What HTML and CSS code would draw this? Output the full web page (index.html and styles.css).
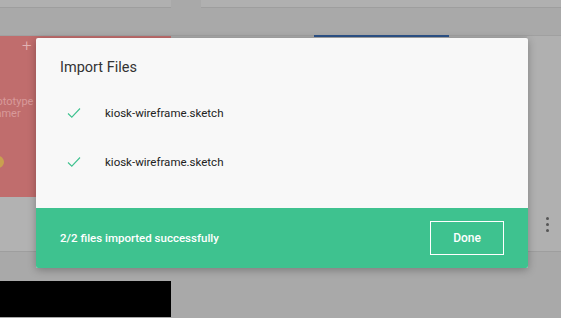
FILE: index.html
```html
<!DOCTYPE html>
<html>
<head>
<meta charset="utf-8">
<link rel="stylesheet" href="styles.css">
</head>
<body>
<div class="page">
  <div class="toprow">
    <div class="tcard tcard-left"></div>
    <div class="tcard tcard-right"></div>
  </div>
  <div class="band"></div>
  <div class="main">
    <div class="lcard">
      <div class="red">
        <span class="plus">+</span>
        <div class="rtext">Prototype<br>Framer</div>
        <span class="dot-y"></span>
      </div>
      <div class="lgray"></div>
    </div>
    <div class="mid"><div class="tabbar"></div></div>
    <div class="rcard">
      <div class="kebab"><span></span><span></span><span></span></div>
    </div>
  </div>
  <div class="black"></div>

  <div class="modal">
    <div class="modal-body">
      <h1 class="title">Import Files</h1>
      <ul class="files">
        <li class="file">
          <svg class="check" width="14" height="12" viewBox="0 0 14 12"><path d="M1 6.5 L4.8 10.2 L13 1.5" fill="none" stroke="#3ec28f" stroke-width="1.1"/></svg>
          <span class="fname">kiosk-wireframe.sketch</span>
        </li>
        <li class="file">
          <svg class="check" width="14" height="12" viewBox="0 0 14 12"><path d="M1 6.5 L4.8 10.2 L13 1.5" fill="none" stroke="#3ec28f" stroke-width="1.1"/></svg>
          <span class="fname">kiosk-wireframe.sketch</span>
        </li>
      </ul>
    </div>
    <div class="modal-foot">
      <span class="status">2/2 files imported successfully</span>
      <button class="done">Done</button>
    </div>
  </div>
</div>
</body>
</html>
```
FILE: styles.css
```css
* { box-sizing: border-box; }
html, body { margin: 0; padding: 0; }
body {
  width: 561px;
  height: 318px;
  overflow: hidden;
  background: #a9a9a9;
  font-family: Roboto, "Liberation Sans", sans-serif;
}
.page { position: relative; width: 561px; height: 318px; }
.toprow { display: flex; gap: 30px; height: 8px; }
.tcard { background: #b0b0b0; border-bottom: 1px solid #9e9e9e; height: 8px; }
.tcard-left { width: 171px; }
.tcard-right { flex: 1; }
.band { height: 28px; border-bottom: 1px solid #a0a0a0; }
.main { display: flex; height: 216px; }
.lcard { width: 171px; display: flex; flex-direction: column; }
.red {
  position: relative;
  height: 161px;
  background: #c06d6d;
  overflow: hidden;
}
.plus {
  position: absolute;
  left: 22px; top: 1px;
  color: #e3b4b4;
  font-size: 17px;
  line-height: 16px;
  font-weight: 300;
}
.rtext {
  position: absolute;
  left: -14px; top: 60px;
  color: #d89a9a;
  font-size: 11px;
  line-height: 12px;
}
.dot-y {
  position: absolute;
  left: -8px; top: 120px;
  width: 12px; height: 12px;
  border-radius: 50%;
  background: #c9a04f;
}
.lgray { flex: 1; background: #b2b2b2; border-bottom: 1px solid #9e9e9e; }
.mid { flex: 1; padding-left: 143px; }
.tabbar { width: 135px; height: 2px; background: #2c5288; margin-top: -1px; }
.rcard {
  width: 34px;
  background: #b0b0b0;
  border-bottom: 1px solid #9e9e9e;
  height: 216px;
  display: flex;
  justify-content: center;
  padding-top: 181px;
  padding-left: 6px;
}
.kebab { display: flex; flex-direction: column; gap: 3px; }
.kebab span { width: 3px; height: 3px; border-radius: 50%; background: #555; }
.black { width: 171px; height: 36px; background: #000; margin-top: 29px; }

.modal {
  position: absolute;
  left: 36px; top: 38px;
  width: 492px; height: 230px;
  border-radius: 2px;
  overflow: hidden;
  background: #f8f8f8;
  box-shadow: 0 2px 8px rgba(0,0,0,0.28);
  display: flex;
  flex-direction: column;
}
.modal-body { height: 170px; padding: 20px 24px 0; }
.title {
  margin: 0;
  font-size: 14.5px;
  line-height: 20px;
  font-weight: 400;
  color: #333;
}
.files { list-style: none; margin: 10px 0 0; padding: 0; }
.file { height: 49px; display: flex; align-items: center; padding-left: 7px; }
.check { flex: none; }
.fname { margin-left: 24px; font-size: 11.5px; color: #222; }
.modal-foot {
  flex: 1;
  background: #3ec28f;
  display: flex;
  align-items: center;
  justify-content: space-between;
  padding: 0 24px;
}
.status { color: #fff; font-size: 11.5px; font-weight: 500; }
.done {
  width: 74px; height: 34px;
  background: transparent;
  border: 1px solid #fff;
  border-radius: 0;
  color: #fff;
  font-family: inherit;
  font-size: 12px;
  font-weight: 500;
  margin-top: 0px;
}
```
